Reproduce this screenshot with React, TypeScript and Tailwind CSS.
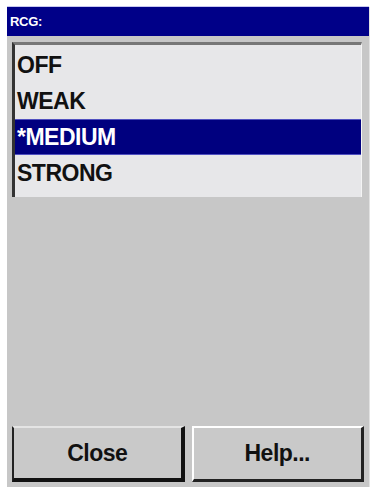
import React from 'react';

const ITEMS = ['OFF', 'WEAK', '*MEDIUM', 'STRONG'];

export default function App() {
  const selected = 2;
  return (
    <div className="w-[374px] h-[487px] bg-white pt-[7px] pl-[7px] pr-[4px] overflow-hidden" style={{ fontFamily: '"Liberation Sans", Arial, sans-serif' }}>
      <div className="flex flex-col h-[480px] bg-[#c7c7c7] border-r border-[#e2e2e2]">
        {/* Title bar */}
        <div className="h-[29px] bg-[#000088] flex items-center pl-[3px] shadow-[0_-1px_0_#c8c8f0]">
          <span className="text-white text-[13px] font-bold tracking-tight">RCG:</span>
        </div>

        {/* List */}
        <div className="mt-[6px] ml-[5px] mr-[7px] h-[155px] bg-[#e7e7e9] border-t-[3px] border-t-[#777] border-l-[3px] border-l-[#333] border-r border-r-[#f4f4f4] pt-[2px]">
          {ITEMS.map((item, i) => (
            <div
              key={item}
              className={
                'h-[36px] flex items-center pl-[2px] text-[23px] font-bold tracking-[-0.5px] ' +
                (i === selected ? 'bg-[#00007f] text-white border-t border-b border-[#5050c0]' : 'text-[#111]')
              }
            >
              {item}
            </div>
          ))}
        </div>

        <div className="flex-1" />

        {/* Buttons */}
        <div className="flex gap-[7px] px-[5px] pb-[5px]">
          <button className="w-[173px] h-[56px] bg-[#c9c9c9] border-t-2 border-t-[#e4e4e4] border-l-2 border-l-[#222] border-r-[4px] border-r-[#111] border-b-[4px] border-b-[#111] text-[23px] font-bold text-[#111] tracking-[-0.5px]">
            Close
          </button>
          <button className="w-[173px] h-[56px] bg-[#c9c9c9] border-t-2 border-t-white border-l-2 border-l-white border-r-[3px] border-r-[#222] border-b-[3px] border-b-[#222] text-[23px] font-bold text-[#111] tracking-[-0.5px]">
            Help...
          </button>
        </div>
      </div>
    </div>
  );
}
